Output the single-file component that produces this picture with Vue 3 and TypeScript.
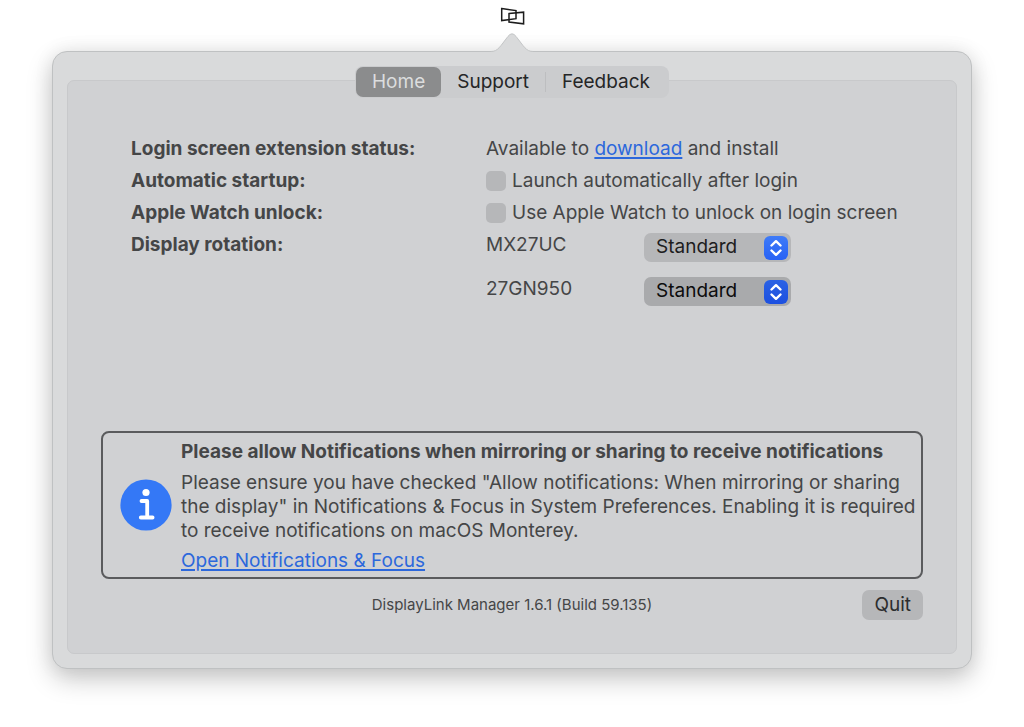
<script setup lang="ts">
import { ref } from 'vue'

interface Display {
  id: string
  name: string
  rotation: string
  dark: boolean
}

const tabs = ['Home', 'Support', 'Feedback']
const activeTab = ref('Home')
const launchAtLogin = ref(false)
const watchUnlock = ref(false)
const rotations = ['Standard', '90°', '180°', '270°']
const displays = ref<Display[]>([
  { id: 'display-1', name: 'MX27UC', rotation: 'Standard', dark: false },
  { id: 'display-2', name: '27GN950', rotation: 'Standard', dark: true },
])
</script>

<template>
  <div class="screen">
    <svg class="tray-icon" width="28" height="18" viewBox="0 0 28 18" aria-label="DisplayLink">
      <path d="M3.7 1.6 L18 3.6 V11.7 L3.7 13.6 Z" />
      <path d="M11 6.6 L25.6 5.2 V16.8 L11 15.1 Z" />
    </svg>

    <main class="popover">
      <svg class="arrow" width="48" height="20" viewBox="0 0 48 20" aria-hidden="true">
        <path class="arrow-fill" d="M3 20 V18.5 C10 18.5 12 13.5 20 3.4 Q24 -1.8 28 3.4 C36 13.5 38 18.5 45 18.5 V20 Z" />
        <path class="arrow-line" d="M3 18.5 C10 18.5 12 13.5 20 3.4 Q24 -1.8 28 3.4 C36 13.5 38 18.5 45 18.5" />
      </svg>

      <nav class="tabs" aria-label="Sections">
        <button
          v-for="tab in tabs"
          :key="tab"
          type="button"
          class="tab"
          :class="{ active: tab === activeTab }"
          @click="activeTab = tab"
        >{{ tab }}</button>
      </nav>

      <section class="group">
        <div class="settings">
          <strong>Login screen extension status:</strong>
          <span>Available to <a href="#download">download</a> and install</span>

          <strong>Automatic startup:</strong>
          <label class="check">
            <input v-model="launchAtLogin" type="checkbox">
            Launch automatically after login
          </label>

          <strong>Apple Watch unlock:</strong>
          <label class="check">
            <input v-model="watchUnlock" type="checkbox">
            Use Apple Watch to unlock on login screen
          </label>

          <strong>Display rotation:</strong>
          <div class="displays">
            <div v-for="display in displays" :key="display.id" class="display">
              <label :for="display.id">{{ display.name }}</label>
              <span class="popup" :class="{ dark: display.dark }">
                <select :id="display.id" v-model="display.rotation">
                  <option v-for="rotation in rotations" :key="rotation">{{ rotation }}</option>
                </select>
                <svg class="stepper" width="24" height="24" viewBox="0 0 24 24" aria-hidden="true">
                  <path d="M7.5 9.5 L12 5.2 L16.5 9.5 M7.5 14.5 L12 18.8 L16.5 14.5" />
                </svg>
              </span>
            </div>
          </div>
        </div>

        <aside class="notice">
          <svg class="info" width="52" height="52" viewBox="0 0 52 52" aria-hidden="true">
            <circle cx="26" cy="26" r="25.6" fill="#3478f6" />
            <circle cx="26" cy="13.5" r="3.6" fill="#fff" />
            <path d="M21.5 22 H27.2 V38.5 M20.8 38.5 H32.6" />
          </svg>
          <div class="notice-text">
            <h2>Please allow Notifications when mirroring or sharing to receive notifications</h2>
            <p>Please ensure you have checked "Allow notifications: When mirroring or sharing the display" in Notifications &amp; Focus in System Preferences. Enabling it is required to receive notifications on macOS Monterey.</p>
            <a href="#notifications">Open Notifications &amp; Focus</a>
          </div>
        </aside>

        <footer class="footer">
          <span class="version">DisplayLink Manager 1.6.1 (Build 59.135)</span>
          <button type="button" class="quit">Quit</button>
        </footer>
      </section>
    </main>
  </div>
</template>

<style>
body {
  background: #fff;
}
</style>

<style scoped>
.screen,
.screen * {
  box-sizing: border-box;
}

.screen {
  display: flex;
  flex-direction: column;
  align-items: center;
  padding: 7px 52px 58px;
  overflow: hidden;
  font-family: Inter, "Liberation Sans", sans-serif;
  font-size: 19px;
  line-height: 24px;
  color: #454647;
}

.tray-icon {
  fill: none;
  stroke: #1c1c1c;
  stroke-width: 1.5;
}

.popover {
  position: relative;
  display: flex;
  flex-direction: column;
  align-items: center;
  width: 100%;
  margin-top: 26px;
  padding: 14px;
  border: 1px solid #bfc1c2;
  border-radius: 15px;
  background: #d9dadb;
  box-shadow: 0 10px 26px rgba(0, 0, 0, 0.22), 0 0 20px rgba(0, 0, 0, 0.07);
}

.arrow {
  position: absolute;
  bottom: 100%;
  left: 50%;
  margin-bottom: -1px;
  margin-left: -24px;
}

.arrow-fill {
  fill: #d9dadb;
}

.arrow-line {
  fill: none;
  stroke: #c3c5c6;
  stroke-width: 1;
}

.tabs {
  z-index: 1;
  display: flex;
  margin-bottom: -18px;
  padding: 1px 3px 1px 1px;
  border-radius: 8px;
  background: #cbccce;
}

.tab {
  height: 30px;
  padding: 0 16px;
  border: 0;
  border-radius: 7px;
  background: transparent;
  color: #252627;
  font: inherit;
}

.tab.active {
  background: #8b8c8d;
  color: #dcddde;
}

.tab + .tab:last-child {
  border-left: 1px solid #bdbec0;
  border-image: linear-gradient(transparent 20%, #bdbec0 20%, #bdbec0 80%, transparent 80%) 1;
}

.group {
  width: 100%;
  padding: 56px 33px 33px;
  border: 1px solid #c8c9cb;
  border-radius: 7px;
  background: #d0d1d3;
}

.settings {
  display: grid;
  grid-template-columns: 355px 1fr;
  row-gap: 8px;
  min-height: 294px;
  padding-left: 30px;
  align-content: start;
}

strong,
h2 {
  font-weight: 700;
}

a {
  color: #2c68dc;
  text-decoration: underline;
  text-decoration-thickness: 2px;
  text-underline-offset: 2px;
}

.check {
  display: flex;
  align-items: center;
  gap: 6px;
}

.check input {
  appearance: none;
  width: 20px;
  height: 20px;
  margin: 0;
  border-radius: 5px;
  background: #b6b7b9;
}

.check input:checked {
  background: #3478f6;
}

.displays {
  display: grid;
  gap: 15px;
}

.display {
  display: grid;
  grid-template-columns: 158px 147px;
}

.popup {
  position: relative;
}

.popup select {
  display: block;
  appearance: none;
  width: 100%;
  height: 29px;
  padding: 0 30px 2px 12px;
  border: 0;
  border-radius: 7px;
  background: #b6b7b9;
  color: #1d1d1e;
  font: inherit;
}

.popup.dark select {
  background: #a9aaac;
  color: #0c0c0c;
}

.stepper {
  position: absolute;
  top: 3px;
  right: 3px;
  border-radius: 6px;
  background: linear-gradient(#3e7bf8, #2862f5);
  fill: none;
  stroke: #fff;
  stroke-width: 2.4;
  stroke-linecap: round;
  stroke-linejoin: round;
  pointer-events: none;
}

.dark .stepper {
  background: linear-gradient(#2b62e4, #1c50e0);
}

.notice {
  display: flex;
  align-items: center;
  gap: 9px;
  padding: 4px 0 4px 17px;
  border: 2px solid #5a5b5d;
  border-radius: 8px;
}

.notice-text {
  padding-top: 3px;
}

.info {
  flex: none;
}

.info path {
  fill: none;
  stroke: #fff;
  stroke-width: 3.8;
  stroke-linecap: round;
  stroke-linejoin: round;
}

h2 {
  margin: 0 0 7px;
  font-size: 19px;
  line-height: 24px;
}

p {
  margin: 0 0 6px;
}

.footer {
  display: grid;
  grid-template-columns: 1fr auto 1fr;
  align-items: center;
  margin-top: 11px;
}

.version {
  grid-column: 2;
  font-size: 15px;
}

.quit {
  justify-self: end;
  height: 30px;
  padding: 0 12px;
  border: 0;
  border-radius: 7px;
  background: #b6b7b9;
  color: #2c2d2e;
  font: inherit;
}
</style>
